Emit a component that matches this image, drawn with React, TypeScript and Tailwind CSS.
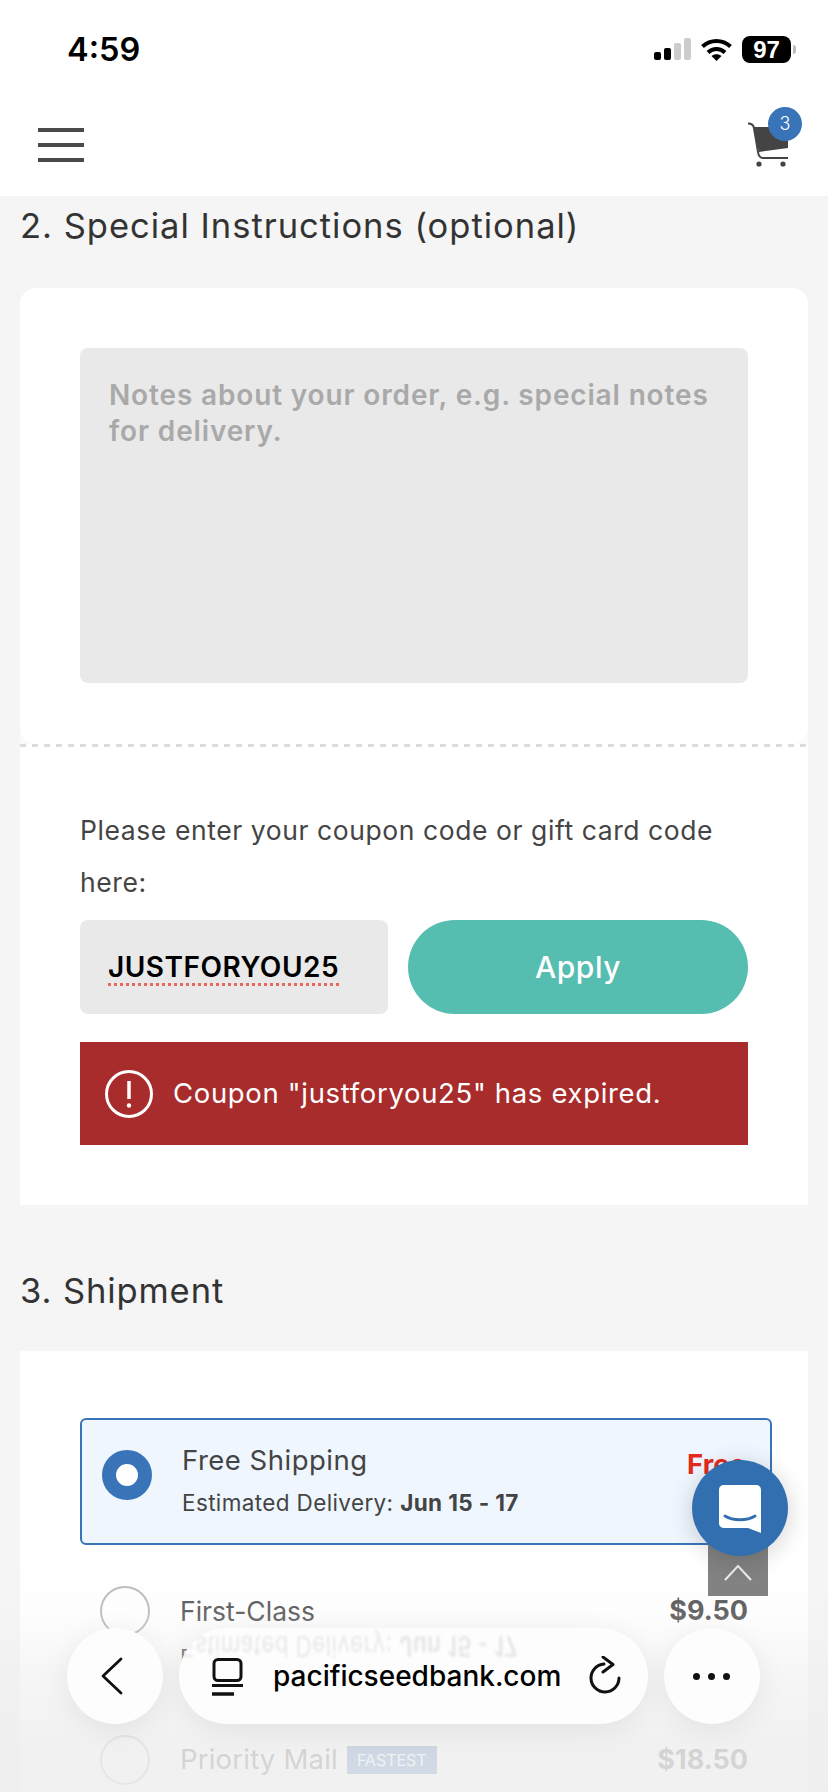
import React from "react";

const mont = "font-['Inter','Liberation_Sans',sans-serif]";

function Radio() {
  return <div className="w-[50px] h-[50px] rounded-full border-2 border-[#bdbab8] shrink-0" />;
}

export default function App() {
  return (
    <div className={`relative w-[828px] h-[1792px] overflow-hidden bg-[#f5f5f5] ${mont} text-[#333]`}>
      {/* status bar */}
      <div className="h-[98px] bg-white flex items-start justify-between pt-[29px] pl-[67px] pr-[37px]">
        <span className="text-[32.5px] leading-[42px] font-semibold text-black">4:59</span>
        <div className="flex items-start gap-[10px] mt-[7px]">
          <svg width="37" height="24" viewBox="0 0 37 24" className="mt-[2px]">
            <rect x="0" y="14" width="7" height="8" rx="2" fill="#000" />
            <rect x="10" y="10" width="7" height="12" rx="2" fill="#000" />
            <rect x="20" y="5" width="7" height="17" rx="2" fill="#ccc" />
            <rect x="30" y="0" width="7" height="22" rx="2" fill="#ccc" />
          </svg>
          <svg width="31" height="24" viewBox="0 0 31 24" fill="none" stroke="#000" strokeWidth="4" className="mt-[2px]">
            <path d="M1.5 8.5C9.5 1 21.5 1 29.5 8.5" />
            <path d="M7 14.5C12 9.8 19 9.8 24 14.5" />
            <path d="M15.5 23L10.5 18C13.5 15.8 17.5 15.8 20.5 18Z" fill="#000" stroke="none" />
          </svg>
          <div className="relative w-[49px] h-[27px] rounded-[8px] bg-black text-white text-[24px] font-bold leading-[27px] text-center font-['Liberation_Sans',sans-serif]">
            97
            <span className="absolute right-[-5px] top-[9px] w-[3px] h-[9px] rounded-r-full bg-[#bbb]" />
          </div>
        </div>
      </div>

      {/* header */}
      <div className="h-[98px] bg-white flex items-start justify-between pl-[38px] pr-[26px]">
        <div className="mt-[30px] flex flex-col gap-[11px] w-[46px]">
          <div className="h-[4px] bg-[#4a4a4a]" />
          <div className="h-[4px] bg-[#4a4a4a]" />
          <div className="h-[4px] bg-[#4a4a4a]" />
        </div>
        <div className="relative w-[56px] h-[64px] mt-[9px]">
          <svg className="absolute left-[2px] top-[15px]" width="42" height="46" viewBox="0 0 42 46" fill="none">
            <path d="M5 5H40V26L11 30Z" fill="#444" />
            <path d="M0 1.5C4 1.5 5.5 3 6 6L10 30C10.5 34 12 36 15 36H40" stroke="#444" strokeWidth="2" />
            <circle cx="11" cy="42" r="2.6" fill="#444" />
            <circle cx="35" cy="42" r="2.6" fill="#444" />
          </svg>
          <div className="absolute right-0 top-0 w-[34px] h-[34px] rounded-full bg-[#3a74b8] text-white text-[18px] leading-[34px] text-center font-light">3</div>
        </div>
      </div>

      {/* section 2 */}
      <h2 className="h-[60px] pl-[20px] pt-[5px] text-[34.5px] leading-[50px] tracking-[1px] text-[#333] whitespace-nowrap">2. Special Instructions (optional)</h2>
      <div className="mx-[20px] mt-[32px]">
        <div className="bg-[linear-gradient(to_bottom,transparent_50%,#fafafa_50%)]">
          <div className="h-[456px] rounded-[16px] bg-white px-[60px] pt-[60px]">
            <div className="h-[335px] rounded-[8px] bg-[#e9e9e9] px-[29px] pt-[29px] text-[28px] leading-[36px] tracking-[0.85px] font-semibold text-[#a9a9a9]">
              Notes about your order, e.g. special notes for delivery.
            </div>
          </div>
        </div>
        <div className="h-[3px] bg-white bg-[repeating-linear-gradient(to_right,#dcdcdc_0_6px,transparent_6px_12px)]" />
        <div className="h-[458px] bg-white px-[60px] pt-[57px]">
          <p className="text-[26.5px] leading-[52px] tracking-[0.58px] text-[#444]">Please enter your coupon code or gift card code here:</p>
          <div className="flex gap-[20px] mt-[12px]">
            <div className="w-[308px] h-[94px] rounded-[8px] bg-[#e9e9e9] flex items-center pl-[28px] text-black text-[28px] tracking-[0.5px] font-semibold">
              <span className="underline decoration-dotted decoration-[#e8675c] decoration-[3px] underline-offset-[6px]">JUSTFORYOU25</span>
            </div>
            <button className="flex-1 h-[94px] rounded-full bg-[#56bdb1] text-white text-[30px] font-medium tracking-[0.5px]">Apply</button>
          </div>
          <div className="mt-[28px] h-[103px] bg-[#a82c2b] flex items-center pl-[25px] text-white text-[27.5px] tracking-[0.67px]">
            <svg width="48" height="48" viewBox="0 0 48 48" fill="none" className="shrink-0">
              <circle cx="24" cy="24" r="22.5" stroke="#fff" strokeWidth="3" />
              <path d="M24 11V29" stroke="#fff" strokeWidth="3.5" />
              <circle cx="24" cy="35.5" r="2.2" fill="#fff" />
            </svg>
            <span className="ml-[20px] whitespace-nowrap">Coupon "justforyou25" has expired.</span>
          </div>
        </div>
      </div>

      {/* section 3 */}
      <h2 className="pl-[20px] mt-[61px] text-[34.5px] leading-[50px] tracking-[0.9px] text-[#333]">3. Shipment</h2>
      <div className="mx-[20px] mt-[35px] bg-white h-[480px] px-[60px] pt-[67px]">
        <div className="w-[692px] h-[127px] rounded-[6px] border-2 border-[#3a74b8] bg-[#eff6fe] flex items-center pl-[20px] pr-[24px]">
          <div className="self-start mt-[30px] w-[50px] h-[50px] rounded-full border-[14px] border-[#3a74b8] bg-white shrink-0" />
          <div className="ml-[30px] flex-1">
            <div className="text-[27.5px] leading-[36px] tracking-[0.5px] text-[#444]">Free Shipping</div>
            <div className="text-[22.5px] leading-[36px] mt-[7px] tracking-[0.37px] text-[#444] whitespace-nowrap">Estimated Delivery: <b className="font-bold">Jun 15 - 17</b></div>
          </div>
          <div className="self-start mt-[24px] text-[27.5px] font-bold text-[#e32b1e]">Free</div>
        </div>
        <div className="flex items-start w-[668px] pl-[20px] mt-[41px]">
          <Radio />
          <div className="ml-[30px] flex-1">
            <div className="text-[26.5px] leading-[50px] text-[#555]">First-Class</div>
            <div className="text-[22.5px] leading-[36px] mt-[4px] tracking-[0.37px] text-[#444] whitespace-nowrap">Estimated Delivery: <b>Jun 15 - 17</b></div>
          </div>
          <div className="text-[27px] leading-[50px] font-bold text-[#555]">$9.50</div>
        </div>
        <div className="flex items-center w-[668px] pl-[20px] mt-[59px]">
          <Radio />
          <div className="ml-[30px] text-[27.5px] tracking-[0.2px] text-[#555]">Priority Mail</div>
          <div className="ml-[9px] h-[28px] px-[10px] bg-[#3a74b8] text-white text-[16px] leading-[28px]">FASTEST</div>
          <div className="ml-auto text-[27px] font-bold text-[#555]">$18.50</div>
        </div>
      </div>

      {/* browser toolbar fade */}
      <div className="absolute left-0 right-0 bottom-0 h-[232px] bg-[linear-gradient(to_bottom,rgba(238,238,238,0)_0%,rgba(238,238,238,0.1)_22%,rgba(238,238,238,0.55)_50%,rgba(238,238,238,0.82)_80%,rgba(238,238,238,0.85)_100%)]" />

      {/* scroll to top */}
      <div className="absolute left-[708px] top-[1540px] w-[60px] h-[56px] bg-[#828282] flex items-center justify-center">
        <svg width="28" height="17" viewBox="0 0 28 17" fill="none" stroke="#eee" strokeWidth="2" className="mt-[9px]"><path d="M1 16L14 2L27 16" /></svg>
      </div>

      {/* chat */}
      <div className="absolute left-[692px] top-[1460px] w-[96px] h-[96px] rounded-full bg-[#316fb0] shadow-[0_4px_24px_rgba(0,0,0,0.18)] flex items-center justify-center">
        <svg width="42" height="48" viewBox="0 0 42 48" className="mt-[2px]">
          <path d="M5 0H37C40 0 42 2 42 5V48L29 43H5C2 43 0 41 0 38V5C0 2 2 0 5 0Z" fill="#fff" />
          <path d="M6 31C14 36 28 36 36 31" stroke="#316fb0" strokeWidth="3" fill="none" strokeLinecap="round" />
        </svg>
      </div>

      {/* toolbar */}
      <div className="absolute left-[67px] top-[1628px] w-[693px] h-[96px] flex gap-[16px]">
        <div className="w-[96px] h-[96px] rounded-full bg-[#fdfdfd] shadow-[0_6px_30px_rgba(0,0,0,0.07)] flex items-center justify-center">
          <svg width="24" height="38" viewBox="0 0 24 38" fill="none" stroke="#111" strokeWidth="2.8" strokeLinecap="round" strokeLinejoin="round" className="mr-[7px]"><path d="M21 2L3 19L21 36" /></svg>
        </div>
        <div className="relative w-[469px] h-[96px] rounded-full bg-[#fdfdfd] shadow-[0_6px_30px_rgba(0,0,0,0.07)] overflow-hidden flex items-center pl-[33px] text-black">
          <span className="absolute left-[2px] top-[3px] -scale-y-125 blur-[1.2px] opacity-[0.1] text-[22.5px] leading-[30px] tracking-[0.37px] text-[#333] whitespace-nowrap">Estimated Delivery: <b>Jun 15 - 17</b></span>
          <svg width="31" height="38" viewBox="0 0 31 38" fill="none" stroke="#111" strokeWidth="3" className="shrink-0 mt-[2px]">
            <rect x="2" y="1.5" width="27" height="21" rx="4" />
            <path d="M0 27.5H31" />
            <path d="M0 36H22" strokeWidth="3.5" />
          </svg>
          <span className="ml-[30px] text-[28px] font-medium whitespace-nowrap">pacificseedbank.com</span>
          <svg width="32" height="38" viewBox="0 0 32 38" fill="none" stroke="#111" strokeWidth="3" strokeLinecap="round" strokeLinejoin="round" className="absolute left-[410px] top-[28px]">
            <path d="M15 8A14 14 0 1 0 30 22" />
            <path d="M14 1L24 8.5L14 16" />
          </svg>
        </div>
        <div className="w-[96px] h-[96px] rounded-full bg-[#fdfdfd] shadow-[0_6px_30px_rgba(0,0,0,0.07)] flex items-center justify-center gap-[8px] pr-[2px]">
          <span className="w-[7px] h-[7px] rounded-full bg-[#111]" />
          <span className="w-[7px] h-[7px] rounded-full bg-[#111]" />
          <span className="w-[7px] h-[7px] rounded-full bg-[#111]" />
        </div>
      </div>
    </div>
  );
}
